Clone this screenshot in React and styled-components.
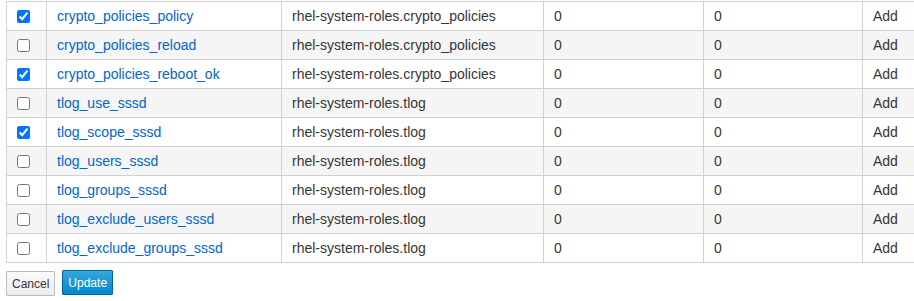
import React from "react";
import styled, { createGlobalStyle } from "styled-components";

const Global = createGlobalStyle`
  html, body { margin: 0; padding: 0; overflow: hidden; background: #fff; }
  body { font-family: "Liberation Sans", Arial, sans-serif; }
`;

const Page = styled.div`
  padding: 1px 0 0 6px;
  width: 930px;
`;

const Table = styled.table`
  border-collapse: collapse;
  table-layout: fixed;
  width: 924px;
  font-size: 14px;
  color: #363636;
`;

const Col = styled.col`
  width: ${(p) => p.$w}px;
`;

const Row = styled.tr`
  background: ${(p) => (p.$striped ? "#f5f5f5" : "#fff")};
  height: 29px;
`;

const Cell = styled.td`
  box-sizing: border-box;
  border: 1px solid #d1d1d1;
  padding: 0 10px;
  vertical-align: middle;
  white-space: nowrap;
  overflow: hidden;
`;

const Check = styled.input`
  width: 13px;
  height: 13px;
  margin: 1px 0 0 0;
  display: block;
  accent-color: #0075ff;
`;

const Link = styled.a`
  color: #0066cc;
  text-decoration: none;
`;

const Actions = styled.div`
  display: flex;
  gap: 7px;
  margin-top: 7px;
  align-items: flex-start;
`;

const Button = styled.button`
  font-family: "Liberation Sans", Arial, sans-serif;
  font-size: 12px;
  height: 25px;
  padding: 0 5px;
  border-radius: 1px;
  border: 1px solid ${(p) => (p.$primary ? "#00659c" : "#bbb")};
  background: ${(p) =>
    p.$primary
      ? "linear-gradient(#39a5dc, #0088ce)"
      : "linear-gradient(#fafafa, #ededed)"};
  color: ${(p) => (p.$primary ? "#fff" : "#363636")};
  margin-top: ${(p) => (p.$primary ? 0 : 1)}px;
`;

const rows = [
  ["crypto_policies_policy", "rhel-system-roles.crypto_policies", true],
  ["crypto_policies_reload", "rhel-system-roles.crypto_policies", false],
  ["crypto_policies_reboot_ok", "rhel-system-roles.crypto_policies", true],
  ["tlog_use_sssd", "rhel-system-roles.tlog", false],
  ["tlog_scope_sssd", "rhel-system-roles.tlog", true],
  ["tlog_users_sssd", "rhel-system-roles.tlog", false],
  ["tlog_groups_sssd", "rhel-system-roles.tlog", false],
  ["tlog_exclude_users_sssd", "rhel-system-roles.tlog", false],
  ["tlog_exclude_groups_sssd", "rhel-system-roles.tlog", false],
];

export default function App() {
  return (
    <>
      <Global />
      <Page>
        <Table>
          <colgroup>
            <Col $w={40} />
            <Col $w={235} />
            <Col $w={262} />
            <Col $w={160} />
            <Col $w={159} />
            <Col $w={68} />
          </colgroup>
          <tbody>
            {rows.map(([name, role, checked], i) => (
              <Row key={name} $striped={i % 2 === 1}>
                <Cell>
                  <Check type="checkbox" defaultChecked={checked} />
                </Cell>
                <Cell>
                  <Link href="#">{name}</Link>
                </Cell>
                <Cell>{role}</Cell>
                <Cell>0</Cell>
                <Cell>0</Cell>
                <Cell>Add</Cell>
              </Row>
            ))}
          </tbody>
        </Table>
        <Actions>
          <Button>Cancel</Button>
          <Button $primary>Update</Button>
        </Actions>
      </Page>
    </>
  );
}
